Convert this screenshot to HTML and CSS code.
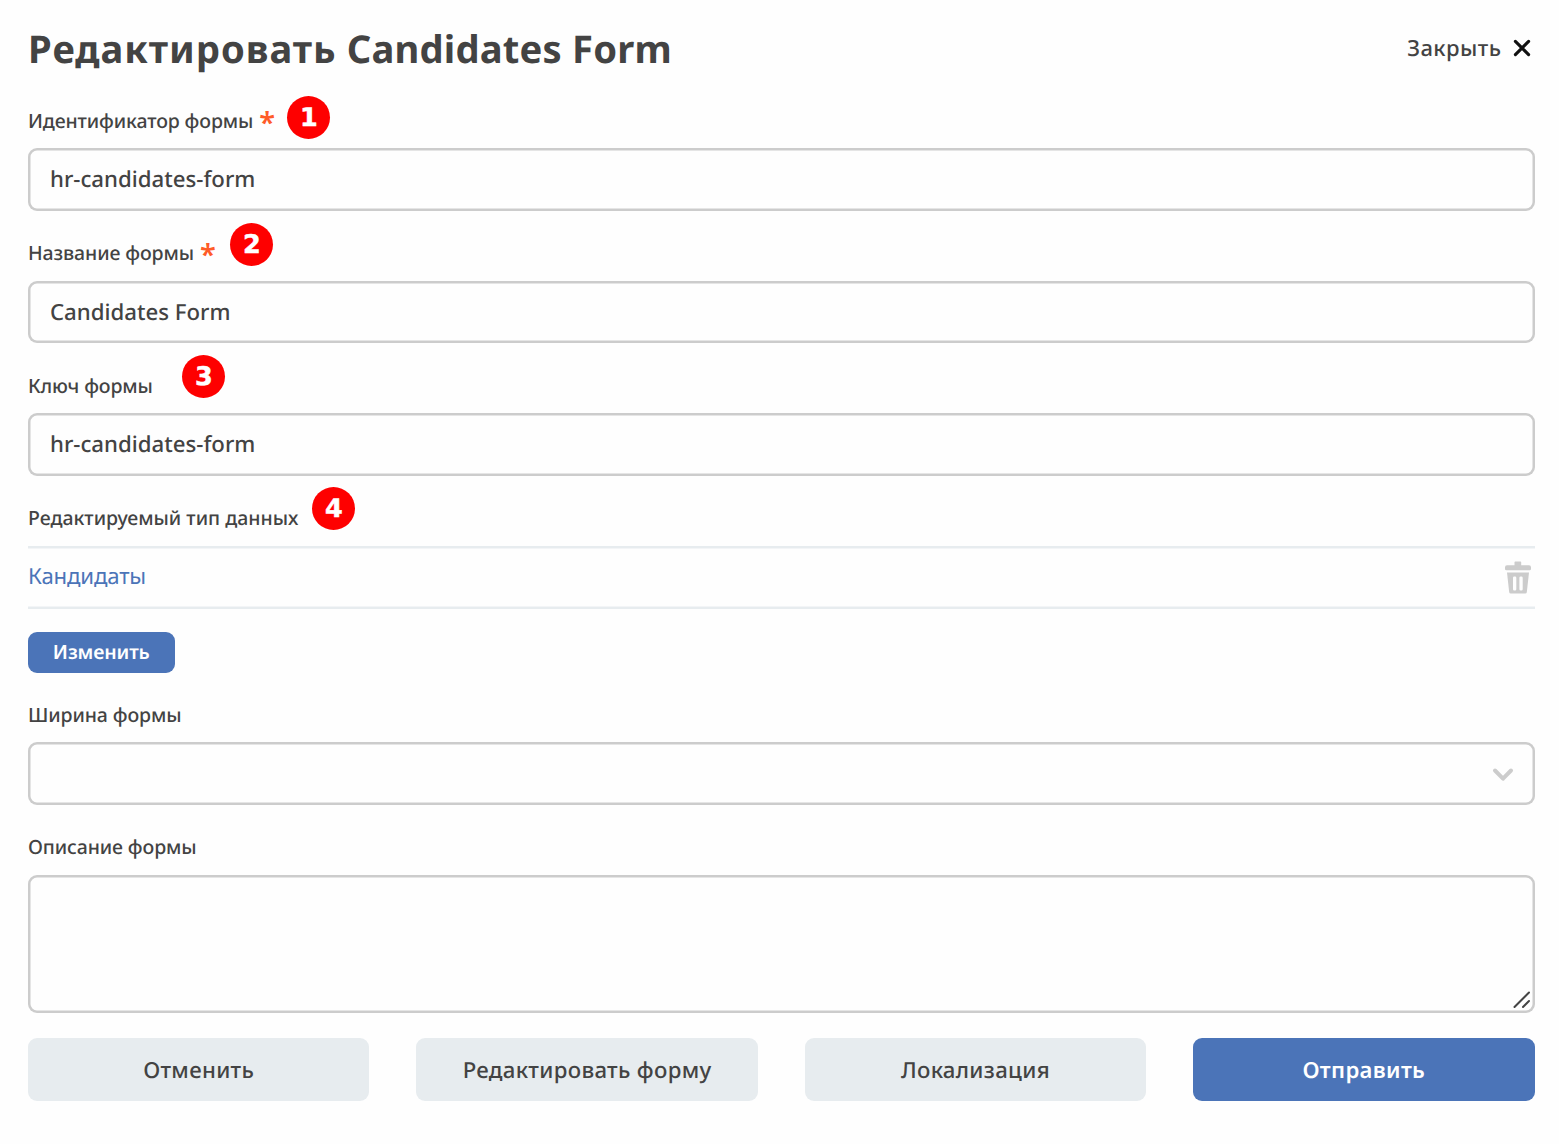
FILE: index.html
```html
<!DOCTYPE html>
<html lang="ru">
<head>
<meta charset="utf-8">
<title>Редактировать Candidates Form</title>
<link rel="stylesheet" href="styles.css">
</head>
<body>
<main class="dialog">
  <header class="header">
    <h1 class="title"><span class="verb">Редактировать</span> Candidates Form</h1>
    <button class="close" type="button"><span>Закрыть</span>
      <svg class="close-icon" viewBox="0 0 18 18"><path d="M2.4 2.4 15.6 15.6M15.6 2.4 2.4 15.6"/></svg>
    </button>
  </header>
  <section class="field">
    <div class="label"><span>Идентификатор формы</span><span class="required">*</span><b class="badge b1">1</b></div>
    <div class="input"><span class="value">hr-candidates-form</span></div>
  </section>
  <section class="field">
    <div class="label"><span>Название формы</span><span class="required">*</span><b class="badge b2">2</b></div>
    <div class="input"><span class="value">Candidates Form</span></div>
  </section>
  <section class="field">
    <div class="label"><span>Ключ формы</span><b class="badge b3">3</b></div>
    <div class="input"><span class="value">hr-candidates-form</span></div>
  </section>
  <section class="field field-type">
    <div class="label"><span class="type-label">Редактируемый тип данных</span><b class="badge b4">4</b></div>
    <div class="row">
      <a class="link">Кандидаты</a>
      <svg class="trash" viewBox="0 0 28 34"><path fill-rule="evenodd" d="M10.5 1.2Q10.5.5 11.3.5H16.4Q17.2.5 17.2 1.2V4.200H25Q27 4.200 27 6.200V8Q27 9.300 25.600 9.300H2.400Q1 9.300 1 8V6.200Q1 4.200 3 4.200H10.500ZM3 11.500H25L22.800 31.200Q22.600 32.500 21.200 32.500H6.800Q5.400 32.500 5.200 31.200ZM10.300 15.500Q9 15.500 9 16.800V28.200Q9 29.500 10.300 29.500H11Q12.300 29.500 12.300 28.200V16.800Q12.300 15.500 11 15.500ZM16.700 15.500Q15.400 15.500 15.400 16.800V28.200Q15.400 29.500 16.700 29.500H17.400Q18.700 29.500 18.700 28.200V16.800Q18.700 15.500 17.400 15.500Z"/></svg>
    </div>
    <button class="change" type="button">Изменить</button>
  </section>
  <section class="field">
    <div class="label"><span>Ширина формы</span></div>
    <div class="input select"><svg class="chevron" viewBox="0 0 22 16"><path d="M3 3.500 11 11.700 19 3.500"/></svg></div>
  </section>
  <section class="field">
    <div class="label"><span>Описание формы</span></div>
    <div class="input area"><svg class="grip" viewBox="0 0 18 18"><path d="M1.500 16 16 1.500M10 16 16 10"/></svg></div>
  </section>
  <footer class="actions">
    <button class="action" type="button">Отменить</button>
    <button class="action" type="button">Редактировать форму</button>
    <button class="action" type="button">Локализация</button>
    <button class="action primary" type="button">Отправить</button>
  </footer>
</main>
</body>
</html>
```

FILE: styles.css
```css
* { box-sizing: border-box; }
body { margin: 0; background: #fefefe; color: #434343; font-family: "Noto Sans", sans-serif; text-rendering: geometricPrecision; }
button { border: 0; margin: 0; padding: 0; background: none; color: inherit; font: inherit; text-rendering: inherit; white-space: nowrap; }
.dialog { width: 1559px; height: 1144px; padding: 0 24.5px 0 28px; overflow: hidden; }
.header { display: flex; justify-content: space-between; height: 105.5px; padding-top: 21px; }
.title { margin: 0; font-size: 38.2px; line-height: 56px; font-weight: 700; letter-spacing: 0.2px; white-space: nowrap; }
.verb { letter-spacing: 0.970px; }
.close { display: flex; align-items: center; gap: 11px; height: 32px; margin: 11px 4px 0 0; font-size: 22px; line-height: 32px; font-weight: 500; letter-spacing: 0.450px; }
.close-icon { width: 18px; height: 18px; fill: none; stroke: #111; stroke-width: 3.1; stroke-linecap: round; }
.field { margin-bottom: 27.5px; }
.label { position: relative; height: 42.5px; font-size: 19.5px; line-height: 30px; font-weight: 500; letter-spacing: -0.120px; white-space: nowrap; }
.type-label { letter-spacing: 0; }
.required { display: inline-block; height: 30px; margin-left: 6px; color: #ff5b28; font-size: 29px; line-height: 33px; font-weight: 600; vertical-align: top; }
.badge { position: absolute; width: 43px; height: 43px; border-radius: 50%; background: #fe0000; color: #fff; font: bold 25.5px/44.5px "DejaVu Sans", sans-serif; -webkit-text-stroke: 0.5px #fff; text-align: center; }
.b1 { left: 259.300px; top: -9.500px; }
.b2 { left: 202.300px; top: -15.500px; }
.b3 { left: 154.300px; top: -16px; }
.b4 { left: 284.300px; top: -16px; }
.input { display: flex; align-items: center; height: 62.5px; padding: 0 22px; border-radius: 9px; box-shadow: inset 0 0 0 2.5px #ccc; font-size: 22.2px; font-weight: 500; letter-spacing: 0.010px; }
.value { padding-bottom: 1.4px; }
.row { display: flex; align-items: center; justify-content: space-between; height: 63px; box-shadow: inset 0 2.5px #e7ecef, inset 0 -2.5px #e7ecef; }
.link { padding-bottom: 3px; color: #4b74b8; font-size: 22.2px; line-height: 30px; letter-spacing: -0.180px; }
.trash { width: 28px; height: 34px; margin: 2px 2.700px 0 0; fill: #ccc; }
.change { display: block; width: 146.500px; height: 41px; padding-bottom: 2px; margin-top: 23.500px; border-radius: 9px; background: #4b74b8; color: #fff; font-size: 19.5px; line-height: 39px; font-weight: 600; letter-spacing: -0.150px; }
.field-type { margin-bottom: 26.700px; }
.select { justify-content: flex-end; padding: 3px 20.200px 0 0; }
.chevron { width: 22px; height: 16px; fill: none; stroke: #ccc; stroke-width: 4; stroke-linecap: round; stroke-linejoin: round; }
.area { height: 138px; justify-content: flex-end; align-items: flex-end; padding: 0 4px 4px 0; }
.grip { width: 18px; height: 18px; fill: none; stroke: #444; stroke-width: 2; stroke-linecap: round; }
.actions { display: grid; grid-template-columns: repeat(4, 1fr); gap: 47px; margin-top: -2px; }
.action { height: 63px; padding-bottom: 0.5px; border-radius: 9px; background: #e7ecef; font-size: 22.2px; font-weight: 500; letter-spacing: 0.320px; }
.primary { background: #4b74b8; color: #fff; font-weight: 600; }
```
